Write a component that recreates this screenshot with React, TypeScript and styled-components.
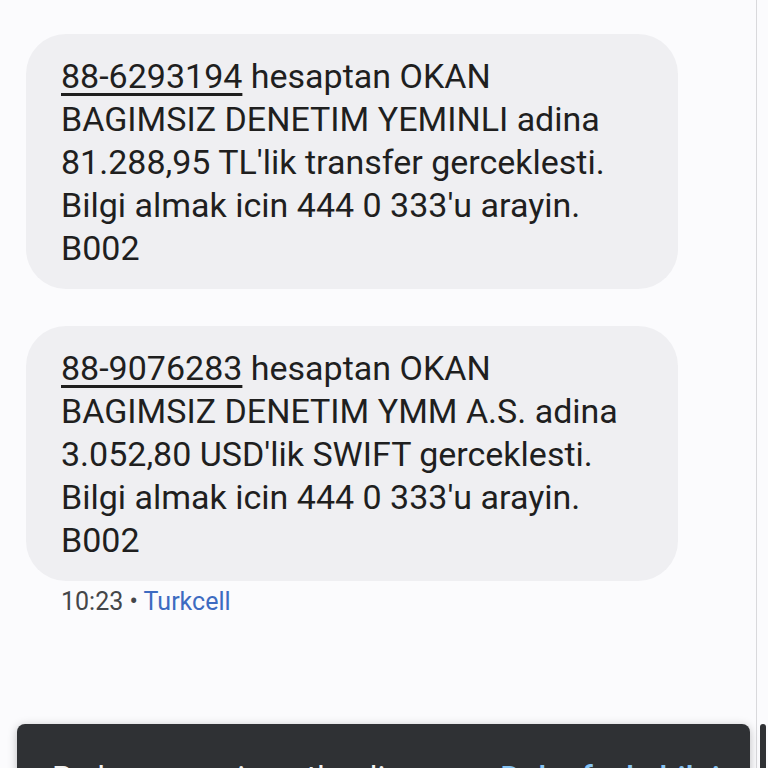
import React from "react";
import styled, { createGlobalStyle } from "styled-components";

const Global = createGlobalStyle`
  html, body { margin: 0; padding: 0; }
  body {
    width: 768px;
    height: 768px;
    overflow: hidden;
    background: #fbfbfd;
    font-family: Roboto, "Noto Sans", "Liberation Sans", sans-serif;
  }
`;

const Screen = styled.div`
  display: flex;
  width: 768px;
  height: 768px;
  position: relative;
  overflow: hidden;
`;

const Thread = styled.main`
  flex: 1;
  display: flex;
  flex-direction: column;
  align-items: flex-start;
  padding: 34px 0 0 26px;
`;

const Bubble = styled.div<{ $gap?: number }>`
  box-sizing: border-box;
  width: 652px;
  background: #efeff2;
  border-radius: 40px;
  padding: 21px 34px 19px 35px;
  margin-bottom: ${(p) => p.$gap ?? 0}px;
  color: #1f1f1f;
  font-size: 34px;
  line-height: 43px;
`;

const Account = styled.span`
  text-decoration: underline;
  text-decoration-thickness: 3px;
  text-underline-offset: 5px;
`;

const Meta = styled.div`
  margin: 5px 0 0 35px;
  font-size: 25px;
  line-height: 32px;
  color: #444649;
`;

const Carrier = styled.span`
  color: #3d6bc1;
`;

const ScrollTrack = styled.div`
  width: 10px;
  border-left: 1px solid #d9d9dc;
  display: flex;
  flex-direction: column;
  justify-content: flex-end;
  align-items: center;
  padding-left: 1px;
`;

const Thumb = styled.div`
  width: 6px;
  height: 44px;
  border-radius: 3px 3px 0 0;
  background: #2f3134;
`;

const Snackbar = styled.div`
  position: absolute;
  left: 17px;
  top: 724px;
  width: 733px;
  height: 110px;
  box-sizing: border-box;
  background: #2f3134;
  border-radius: 8px;
  box-shadow: 0 2px 10px rgba(0, 0, 0, 0.25);
  display: flex;
  align-items: flex-start;
  justify-content: space-between;
  padding: 33px 30px 0 35px;
  font-size: 32px;
  line-height: 40px;
`;

const SnackText = styled.span`
  color: #f2f2f2;
`;

const SnackAction = styled.span`
  color: #86c3f2;
  font-weight: 500;
`;

export default function App() {
  return (
    <>
      <Global />
      <Screen>
        <Thread>
          <Bubble $gap={37}>
            <Account>88-6293194</Account> hesaptan OKAN BAGIMSIZ DENETIM YEMINLI adina
            81.288,95 TL'lik transfer gerceklesti. Bilgi almak icin 444 0 333'u arayin.
            B002
          </Bubble>
          <Bubble>
            <Account>88-9076283</Account> hesaptan OKAN BAGIMSIZ DENETIM YMM A.S. adina
            3.052,80 USD'lik SWIFT gerceklesti. Bilgi almak icin 444 0 333'u arayin.
            B002
          </Bubble>
          <Meta>
            10:23 • <Carrier>Turkcell</Carrier>
          </Meta>
        </Thread>
        <ScrollTrack>
          <Thumb />
        </ScrollTrack>
        <Snackbar>
          <SnackText>Bu konuşma işaretlendi</SnackText>
          <SnackAction>Daha fazla bilgi</SnackAction>
        </Snackbar>
      </Screen>
    </>
  );
}
